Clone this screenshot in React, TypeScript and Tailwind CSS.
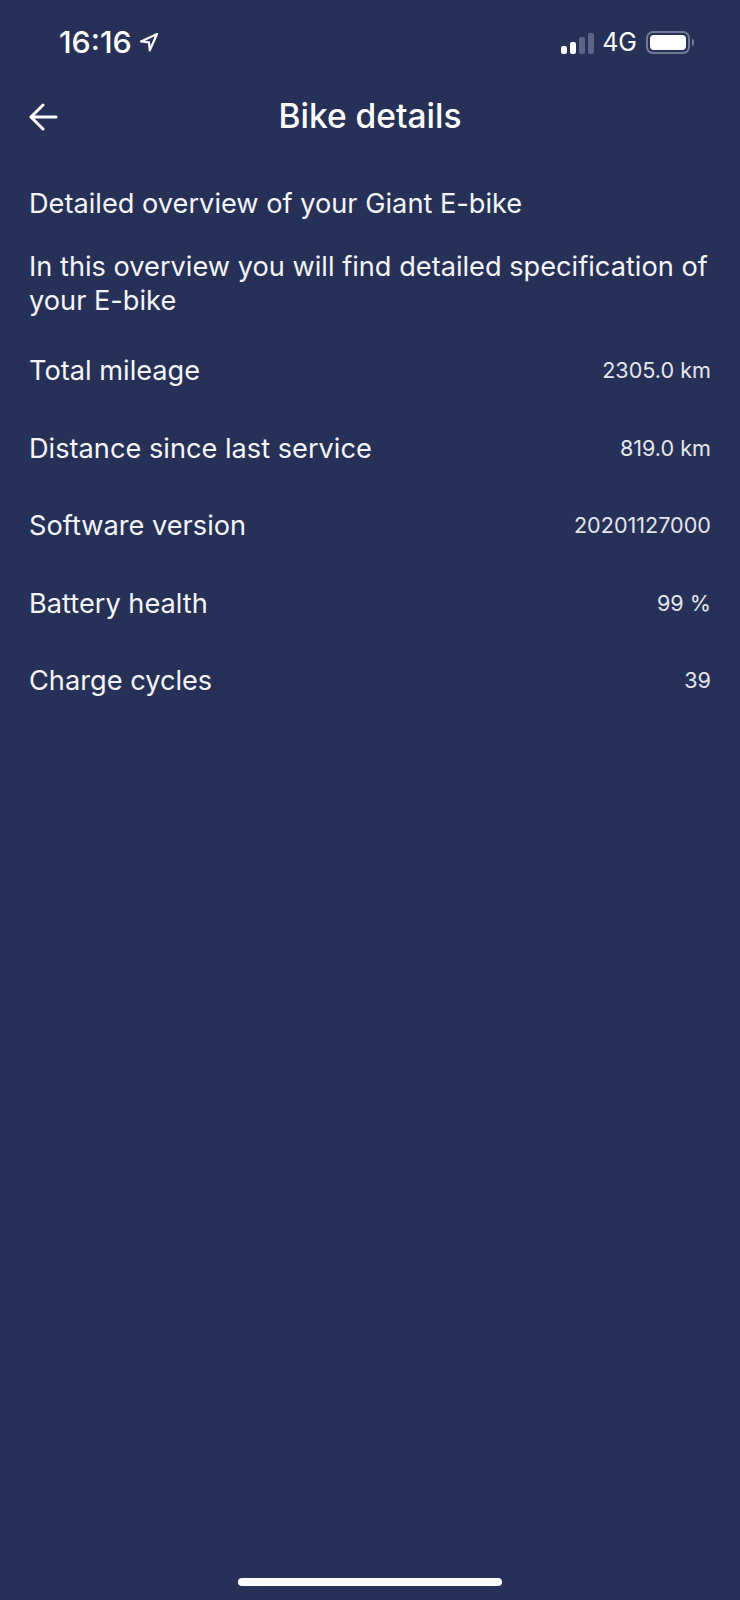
export default function App() {
  const rows = [
    ["Total mileage", "2305.0 km"],
    ["Distance since last service", "819.0 km"],
    ["Software version", "20201127000"],
    ["Battery health", "99 %"],
    ["Charge cycles", "39"],
  ];
  return (
    <div className="w-[740px] h-[1600px] bg-[#273157] text-white flex flex-col font-['Inter',sans-serif] overflow-hidden">
      <div className="h-[84px] shrink-0 flex items-start justify-between pt-[25px] pl-[59px] pr-[46px]">
        <div className="flex items-center gap-[7px] h-[34px]">
          <span className="text-[30.4px] leading-[34px] font-medium">16:16</span>
          <svg width="20" height="20" viewBox="0 0 20 20" fill="none" stroke="white" strokeWidth="2.2" strokeLinejoin="round"><path d="M18 2 2 9.5l8 .8 .8 8z" /></svg>
        </div>
        <div className="flex items-center h-[34px]">
          <div className="flex items-end gap-[3px] h-[22px] mt-[1px]">
            <div className="w-[6px] h-[8px] rounded-[2px] bg-white" />
            <div className="w-[6px] h-[12px] rounded-[2px] bg-white" />
            <div className="w-[6px] h-[17px] rounded-[2px] bg-[#5c6584]" />
            <div className="w-[6px] h-[21px] rounded-[2px] bg-[#5c6584]" />
          </div>
          <span className="ml-[8px] text-[25px] leading-[34px]">4G</span>
          <div className="ml-[9px] w-[44px] h-[23px] rounded-[7px] border-2 border-[#727a96] p-[2px]">
            <div className="w-full h-full rounded-[4px] bg-white" />
          </div>
          <div className="ml-[2px] w-[2px] h-[7px] rounded-r-[2px] bg-[#727a96]" />
        </div>
      </div>
      <div className="h-[64px] shrink-0 relative flex items-center justify-center">
        <svg className="absolute left-[29px] top-[18px]" width="30" height="30" viewBox="0 0 30 30" fill="none" stroke="white" strokeWidth="3" strokeLinecap="round" strokeLinejoin="round"><path d="M2 15h25M14 3 2 15l12 12" /></svg>
        <span className="text-[33.5px] leading-[38px] font-medium">Bike details</span>
      </div>
      <div className="px-[29px] pt-[38px] flex flex-col">
        <p className="text-[27.2px] leading-[36px] text-[#f4f5f8]">Detailed overview of your Giant E-bike</p>
        <p className="mt-[28px] text-[27.2px] leading-[34px] text-[#f4f5f8] w-[690px]">In this overview you will find detailed specification of your E-bike</p>
        <div className="mt-[15px] flex flex-col">
          {rows.map(([k, v]) => (
            <div key={k} className="h-[77.5px] flex items-center justify-between">
              <span className="text-[27.2px] text-[#f4f5f8]">{k}</span>
              <span className="pb-[3px] text-[21.6px] text-[#e4e6ee]">{v}</span>
            </div>
          ))}
        </div>
      </div>
      <div className="mt-auto mb-[14px] mx-auto w-[264px] h-[8px] rounded-full bg-white" />
    </div>
  );
}
